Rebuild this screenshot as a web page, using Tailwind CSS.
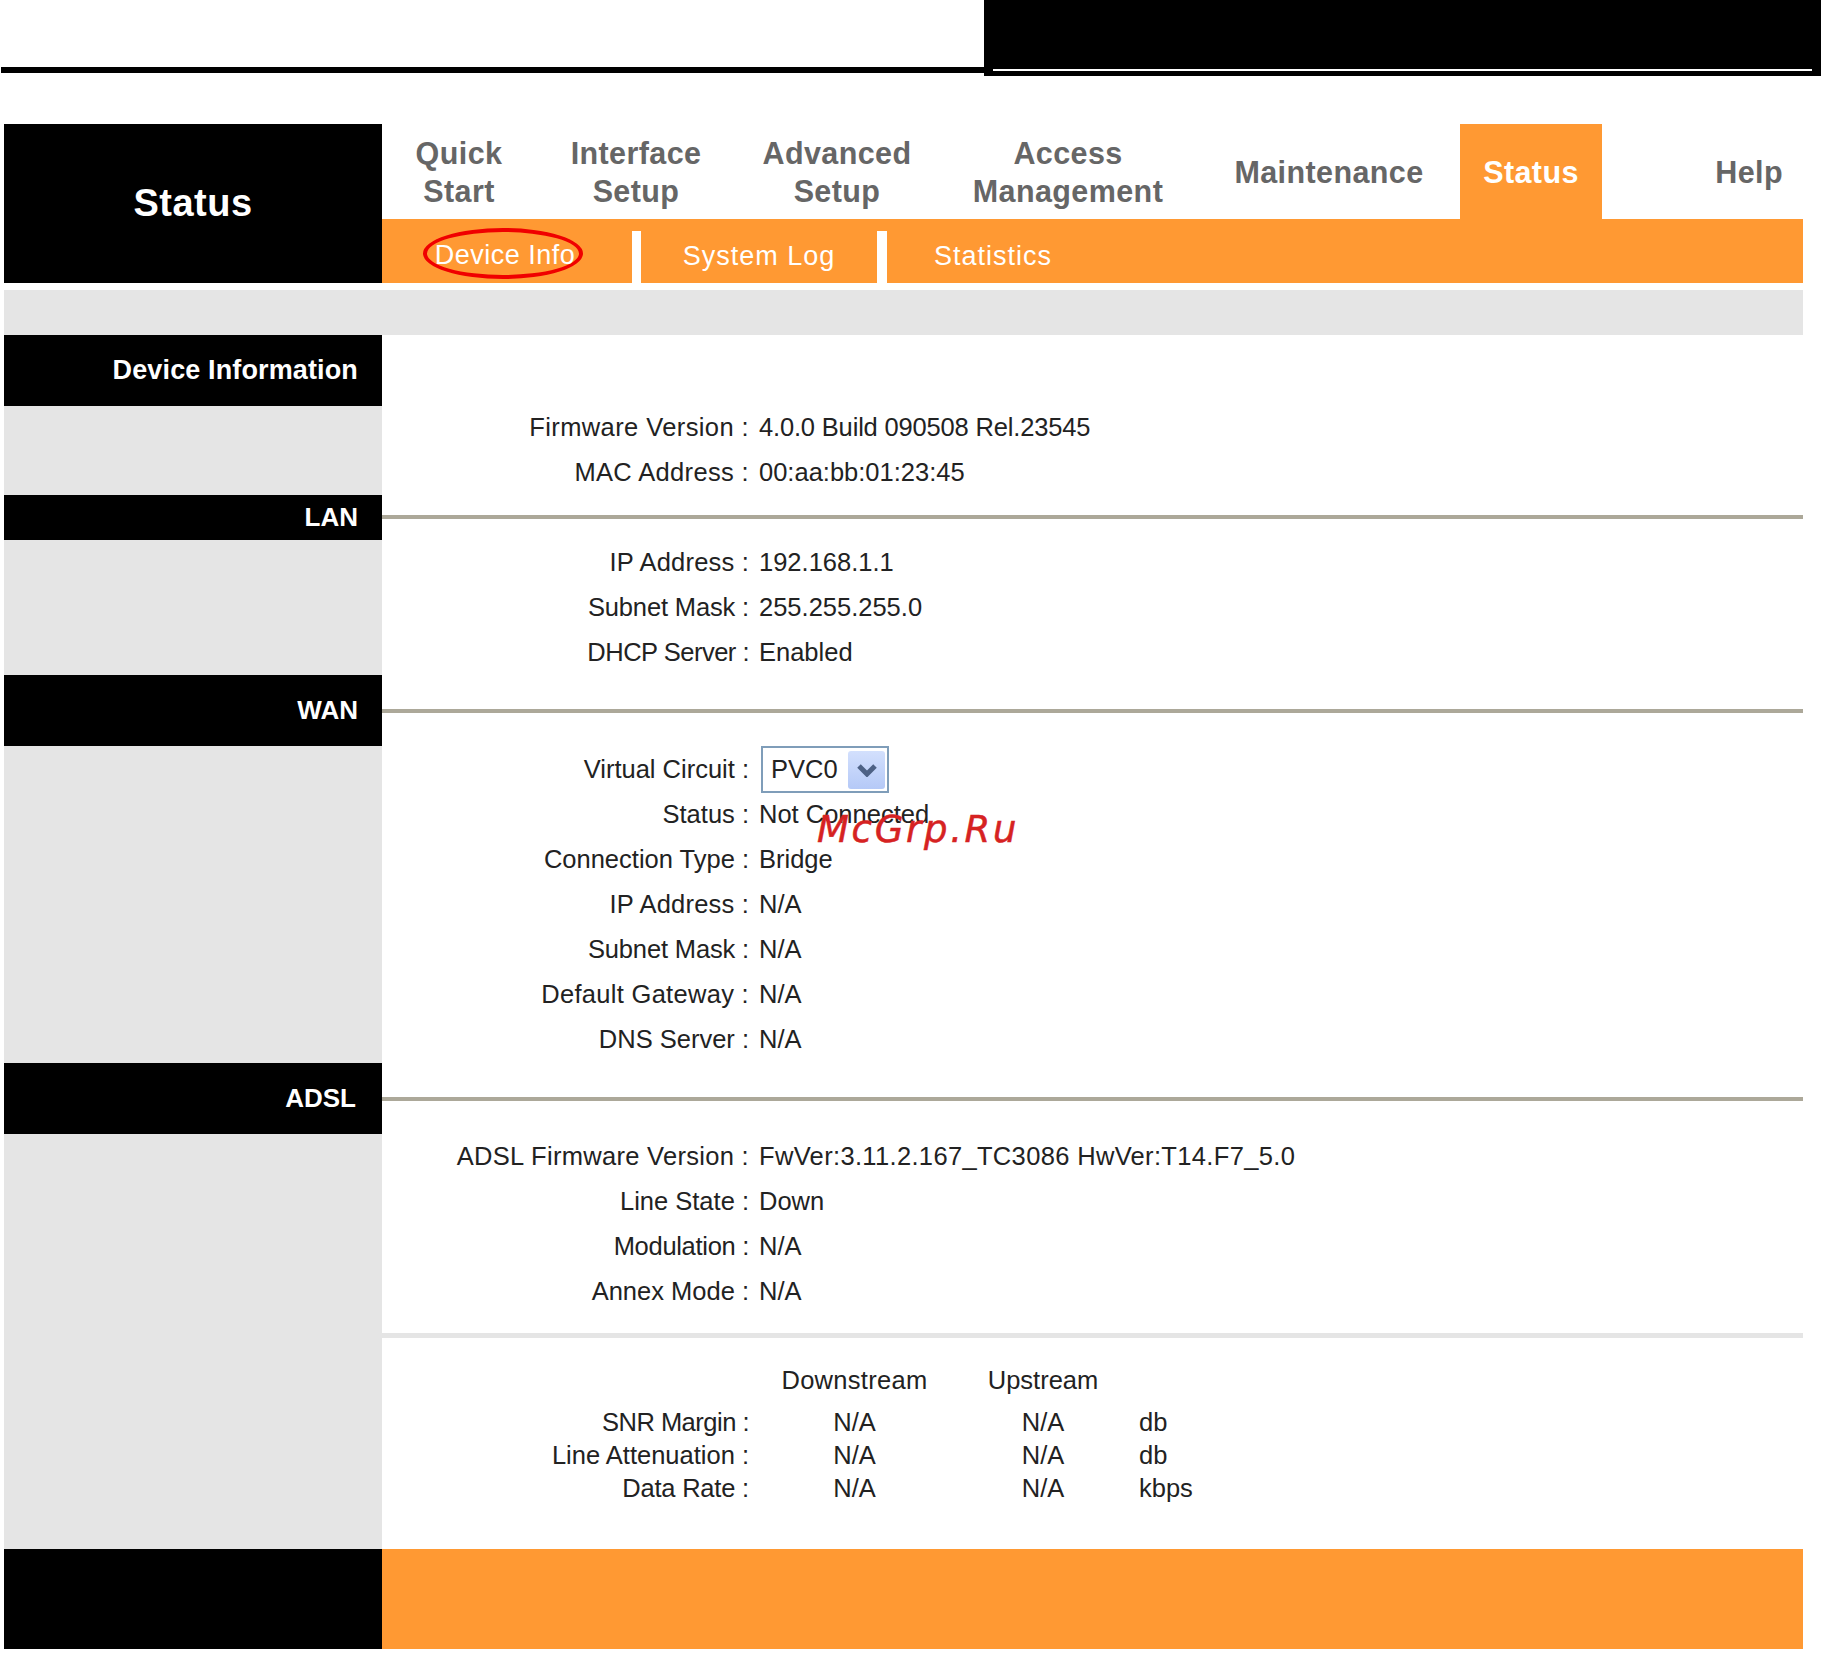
<!DOCTYPE html>
<html lang="en">
<head>
  <meta charset="UTF-8">
  <title>Status - Device Info</title>
  <script src="https://cdn.jsdelivr.net/npm/@tailwindcss/browser@4"></script>
</head>
<body class="relative bg-white font-['Liberation_Sans',sans-serif] text-[25.5px] text-[#222]">

  <!-- top rule and black banner -->
  <div class="flex h-[76px] pl-px pr-px">
    <div class="flex-1 pt-[67px]"><div class="h-[6px] bg-black"></div></div>
    <div class="w-[837px] bg-black px-[9px] pt-[69px]"><div class="h-[2px] bg-white"></div></div>
  </div>

  <div class="ml-[4px] mt-[48px] w-[1799px]">
    <!-- nav -->
    <div class="flex h-[159px]">
      <div class="flex w-[378px] items-center justify-center bg-black text-[38px] font-bold tracking-[0.5px] text-white">Status</div>
      <div class="flex flex-1 flex-col">
        <div class="flex h-[95px] text-[30.5px] leading-[38px] font-bold tracking-[0.4px] text-[#666] text-center">
          <div class="flex w-[154px] items-center justify-center">Quick<br>Start</div>
          <div class="flex w-[200px] items-center justify-center">Interface<br>Setup</div>
          <div class="flex w-[202px] items-center justify-center">Advanced<br>Setup</div>
          <div class="flex w-[260px] items-center justify-center">Access<br>Management</div>
          <div class="flex w-[262px] items-center justify-center">Maintenance</div>
          <div class="flex w-[142px] items-center justify-center bg-[#ff9933] text-white">Status</div>
          <div class="flex flex-1 items-center justify-end pr-[20px]">Help</div>
        </div>
        <div class="flex h-[64px] bg-[#ff9933] text-[27px] tracking-[1px] text-white">
          <div class="w-[250px] pl-[41px] pt-[9px]">
            <div class="flex h-[51px] w-[160px] items-center justify-center rounded-[50%] border-[4px] border-[#f00000] pl-[4px] pt-[4px] tracking-[0.5px]">Device Info</div>
          </div>
          <div class="mt-[12px] w-[9px] bg-white"></div>
          <div class="flex w-[236px] items-center justify-center pt-[10px]">System Log</div>
          <div class="mt-[12px] w-[10px] bg-white"></div>
          <div class="flex items-center pl-[47px] pt-[10px]">Statistics</div>
        </div>
      </div>
    </div>

    <div class="mt-[7px] h-[45px] bg-[#e5e5e5]"></div>

    <!-- Device Information -->
    <div class="flex h-[160px]">
      <div class="w-[378px] bg-[#e5e5e5]">
        <div class="flex h-[71px] items-center justify-end bg-black pr-[24px] text-[27px] font-bold tracking-[0.13px] text-white">Device Information</div>
      </div>
      <div class="flex-1 pt-[70px]">
        <div class="grid h-[45px] grid-cols-[367px_1fr] items-center gap-x-[10px]"><div class="text-right tracking-[0.4px]">Firmware Version :</div><div class="tracking-[-0.17px]">4.0.0 Build 090508 Rel.23545</div></div>
        <div class="grid h-[45px] grid-cols-[367px_1fr] items-center gap-x-[10px]"><div class="text-right tracking-[0.35px]">MAC Address :</div><div>00:aa:bb:01:23:45</div></div>
      </div>
    </div>

    <!-- LAN -->
    <div class="flex h-[180px]">
      <div class="w-[378px] bg-[#e5e5e5]">
        <div class="flex h-[45px] items-center justify-end bg-black pr-[24px] text-[26px] font-bold text-white">LAN</div>
      </div>
      <div class="flex-1">
        <div class="flex h-[45px] items-center pb-[2px]"><div class="h-[4px] w-full bg-[#aca899]"></div></div>
        <div class="grid h-[45px] grid-cols-[367px_1fr] items-center gap-x-[10px]"><div class="text-right tracking-[0.2px]">IP Address :</div><div>192.168.1.1</div></div>
        <div class="grid h-[45px] grid-cols-[367px_1fr] items-center gap-x-[10px]"><div class="text-right tracking-[-0.15px]">Subnet Mask :</div><div>255.255.255.0</div></div>
        <div class="grid h-[45px] grid-cols-[367px_1fr] items-center gap-x-[10px]"><div class="text-right tracking-[-0.5px]">DHCP Server :</div><div>Enabled</div></div>
      </div>
    </div>

    <!-- WAN -->
    <div class="flex h-[388px]">
      <div class="w-[378px] bg-[#e5e5e5]">
        <div class="flex h-[71px] items-center justify-end bg-black pr-[24px] text-[26px] font-bold text-white">WAN</div>
      </div>
      <div class="flex-1">
        <div class="flex h-[71px] items-center"><div class="h-[4px] w-full bg-[#aca899]"></div></div>
        <div class="grid h-[46px] grid-cols-[367px_1fr] items-center gap-x-[10px]">
          <div class="text-right">Virtual Circuit :</div>
          <div class="ml-[2px] flex h-[47px] w-[128px] items-center justify-between border-[2px] border-[#7f9db9] pl-[8px] pr-[2px]">
            <span>PVC0</span>
            <span class="flex h-[38px] w-[37px] items-center justify-center rounded-[3px] bg-linear-to-b from-[#d3e0fd] to-[#b5c9f7]">
              <svg width="22" height="14" viewBox="0 0 22 14"><path d="M3 3 L11 11 L19 3" fill="none" stroke="#4d6185" stroke-width="5"/></svg>
            </span>
          </div>
        </div>
        <div class="grid h-[45px] grid-cols-[367px_1fr] items-center gap-x-[10px]"><div class="text-right">Status :</div><div>Not Connected</div></div>
        <div class="grid h-[45px] grid-cols-[367px_1fr] items-center gap-x-[10px]"><div class="text-right">Connection Type :</div><div>Bridge</div></div>
        <div class="grid h-[45px] grid-cols-[367px_1fr] items-center gap-x-[10px]"><div class="text-right tracking-[0.2px]">IP Address :</div><div>N/A</div></div>
        <div class="grid h-[45px] grid-cols-[367px_1fr] items-center gap-x-[10px]"><div class="text-right tracking-[-0.15px]">Subnet Mask :</div><div>N/A</div></div>
        <div class="grid h-[45px] grid-cols-[367px_1fr] items-center gap-x-[10px]"><div class="text-right tracking-[0.3px]">Default Gateway :</div><div>N/A</div></div>
        <div class="grid h-[45px] grid-cols-[367px_1fr] items-center gap-x-[10px]"><div class="text-right">DNS Server :</div><div>N/A</div></div>
      </div>
    </div>

    <!-- ADSL -->
    <div class="flex h-[486px]">
      <div class="w-[378px] bg-[#e5e5e5]">
        <div class="flex h-[71px] items-center justify-end bg-black pr-[26px] text-[26px] font-bold text-white">ADSL</div>
      </div>
      <div class="flex-1">
        <div class="flex h-[71px] items-center"><div class="h-[4px] w-full bg-[#aca899]"></div></div>
        <div class="grid h-[45px] grid-cols-[367px_1fr] items-center gap-x-[10px]"><div class="text-right tracking-[0.3px]">ADSL Firmware Version :</div><div class="tracking-[0.34px]">FwVer:3.11.2.167_TC3086 HwVer:T14.F7_5.0</div></div>
        <div class="grid h-[45px] grid-cols-[367px_1fr] items-center gap-x-[10px]"><div class="text-right">Line State :</div><div>Down</div></div>
        <div class="grid h-[45px] grid-cols-[367px_1fr] items-center gap-x-[10px]"><div class="text-right tracking-[-0.3px]">Modulation :</div><div>N/A</div></div>
        <div class="grid h-[45px] grid-cols-[367px_1fr] items-center gap-x-[10px]"><div class="text-right">Annex Mode :</div><div>N/A</div></div>
        <div class="mt-[19px] h-[5px] bg-[#e5e5e5]"></div>
        <div class="grid grid-cols-[367px_211px_166px_1fr] items-center pt-[22px] text-center">
          <div class="h-[40px]"></div><div class="tracking-[0.3px]">Downstream</div><div>Upstream</div><div></div>
        </div>
        <div class="mt-[6px] grid grid-cols-[367px_211px_166px_1fr] auto-rows-[33px] items-center text-center">
          <div class="text-right tracking-[-0.5px]">SNR Margin :</div><div>N/A</div><div>N/A</div><div class="pl-[13px] text-left">db</div>
          <div class="text-right">Line Attenuation :</div><div>N/A</div><div>N/A</div><div class="pl-[13px] text-left">db</div>
          <div class="text-right tracking-[-0.2px]">Data Rate :</div><div>N/A</div><div>N/A</div><div class="pl-[13px] text-left">kbps</div>
        </div>
      </div>
    </div>

    <!-- footer bar -->
    <div class="flex h-[100px]">
      <div class="w-[378px] bg-black"></div>
      <div class="flex-1 bg-[#ff9933]"></div>
    </div>
  </div>

  <!-- watermark -->
  <div class="absolute left-[817px] top-[806px] font-['DejaVu_Sans',sans-serif] text-[37px] italic leading-[48px] tracking-[2.7px] text-[#d62222] [-webkit-text-stroke:0.5px_#d62222]">McGrp.Ru</div>
</body>
</html>
